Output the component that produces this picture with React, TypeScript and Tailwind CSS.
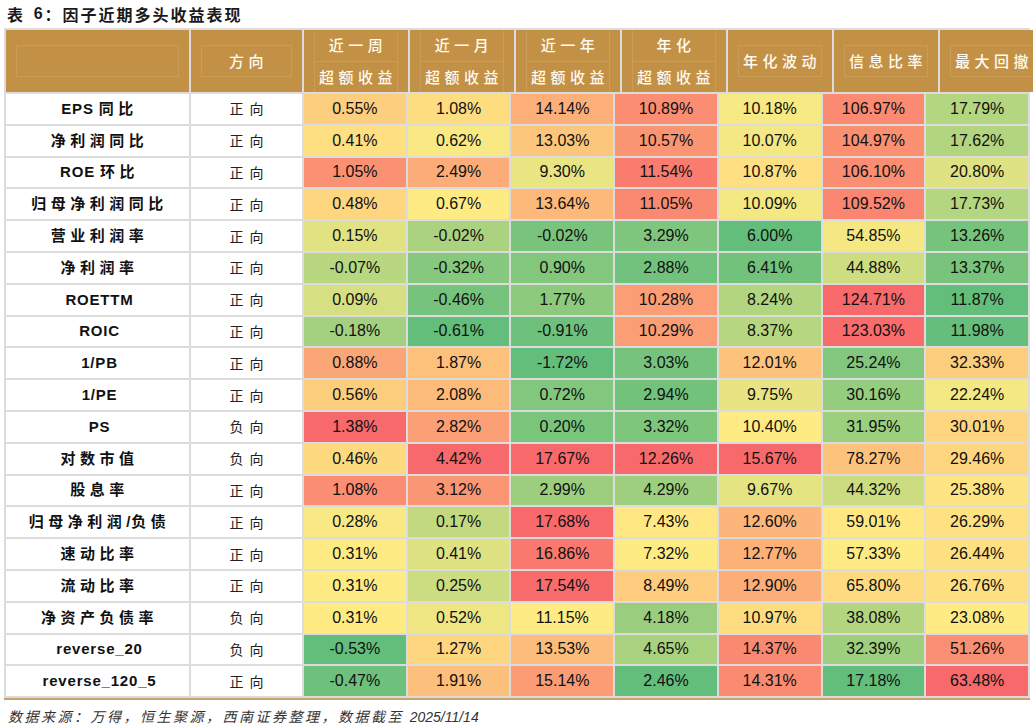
import React from "react";

const rows: string[][] = [
  ["EPS 同比", "正向", "0.55%", "1.08%", "14.14%", "10.89%", "10.18%", "106.97%", "17.79%"],
  ["净利润同比", "正向", "0.41%", "0.62%", "13.03%", "10.57%", "10.07%", "104.97%", "17.62%"],
  ["ROE 环比", "正向", "1.05%", "2.49%", "9.30%", "11.54%", "10.87%", "106.10%", "20.80%"],
  ["归母净利润同比", "正向", "0.48%", "0.67%", "13.64%", "11.05%", "10.09%", "109.52%", "17.73%"],
  ["营业利润率", "正向", "0.15%", "-0.02%", "-0.02%", "3.29%", "6.00%", "54.85%", "13.26%"],
  ["净利润率", "正向", "-0.07%", "-0.32%", "0.90%", "2.88%", "6.41%", "44.88%", "13.37%"],
  ["ROETTM", "正向", "0.09%", "-0.46%", "1.77%", "10.28%", "8.24%", "124.71%", "11.87%"],
  ["ROIC", "正向", "-0.18%", "-0.61%", "-0.91%", "10.29%", "8.37%", "123.03%", "11.98%"],
  ["1/PB", "正向", "0.88%", "1.87%", "-1.72%", "3.03%", "12.01%", "25.24%", "32.33%"],
  ["1/PE", "正向", "0.56%", "2.08%", "0.72%", "2.94%", "9.75%", "30.16%", "22.24%"],
  ["PS", "负向", "1.38%", "2.82%", "0.20%", "3.32%", "10.40%", "31.95%", "30.01%"],
  ["对数市值", "负向", "0.46%", "4.42%", "17.67%", "12.26%", "15.67%", "78.27%", "29.46%"],
  ["股息率", "正向", "1.08%", "3.12%", "2.99%", "4.29%", "9.67%", "44.32%", "25.38%"],
  ["归母净利润/负债", "正向", "0.28%", "0.17%", "17.68%", "7.43%", "12.60%", "59.01%", "26.29%"],
  ["速动比率", "正向", "0.31%", "0.41%", "16.86%", "7.32%", "12.77%", "57.33%", "26.44%"],
  ["流动比率", "正向", "0.31%", "0.25%", "17.54%", "8.49%", "12.90%", "65.80%", "26.76%"],
  ["净资产负债率", "负向", "0.31%", "0.52%", "11.15%", "4.18%", "10.97%", "38.08%", "23.08%"],
  ["reverse_20", "负向", "-0.53%", "1.27%", "13.53%", "4.65%", "14.37%", "32.39%", "51.26%"],
  ["reverse_120_5", "正向", "-0.47%", "1.91%", "15.14%", "2.46%", "14.31%", "17.18%", "63.48%"],
];

const headers: (string | [string, string])[] = [
  "",
  "方向",
  ["近一周", "超额收益"],
  ["近一月", "超额收益"],
  ["近一年", "超额收益"],
  ["年化", "超额收益"],
  "年化波动",
  "信息比率",
  "最大回撤",
];

const RED = [248, 105, 107];
const YEL = [255, 235, 132];
const GRN = [99, 190, 123];

const stats = Array.from({ length: 7 }, (_, c) => {
  const vals = rows.map((r) => parseFloat(r[c + 2])).sort((a, b) => a - b);
  return { min: vals[0], med: vals[Math.floor(vals.length / 2)], max: vals[vals.length - 1] };
});

function cellColor(v: number, c: number) {
  const { min, med, max } = stats[c];
  const from = YEL;
  let to = YEL;
  let t = 0;
  if (v >= med) {
    to = RED;
    t = max === med ? 0 : (v - med) / (max - med);
  } else {
    to = GRN;
    t = med === min ? 0 : (med - v) / (med - min);
  }
  const rgb = from.map((a, i) => Math.round(a + (to[i] - a) * t));
  return `rgb(${rgb[0]},${rgb[1]},${rgb[2]})`;
}

const CJK = /[\u3000-\u303f\u4e00-\u9fff\uff00-\uffef]/;

function Label({ text }: { text: string }) {
  const parts =
    text.match(/[\u3000-\u303f\u4e00-\u9fff\uff00-\uffef]+|[^\u3000-\u303f\u4e00-\u9fff\uff00-\uffef]+/g) || [];
  return (
    <span className="whitespace-nowrap">
      {parts.map((p, i) =>
        CJK.test(p) ? (
          <span key={i} className="font-['Noto_Sans_CJK_SC',sans-serif] text-[15px] font-bold tracking-[4.5px]">
            {p}
          </span>
        ) : (
          <span key={i} className="font-['Liberation_Sans',sans-serif] text-[15px] font-bold tracking-[0.8px]">
            {p}
          </span>
        )
      )}
    </span>
  );
}

function HeaderCell({ h }: { h: string | [string, string] }) {
  if (Array.isArray(h)) {
    return (
      <div className="bg-[#c39145] h-[62px] px-[10px]">
        <div className="h-full flex flex-col border-x border-white/10">
          <div className="flex-1 flex items-center justify-center border-b border-white/10 pl-[4px] whitespace-nowrap">
            {h[0]}
          </div>
          <div className="flex-1 flex items-center justify-center pl-[4px] whitespace-nowrap">{h[1]}</div>
        </div>
      </div>
    );
  }
  return (
    <div className="bg-[#c39145] h-[62px] px-[10px] py-[15px]">
      <div className="h-full flex items-center justify-center border border-white/10 pl-[4px] whitespace-nowrap">
        {h}
      </div>
    </div>
  );
}

export default function App() {
  return (
    <div className="w-[1033px] h-[728px] bg-white text-[#111] font-['Liberation_Sans','Noto_Sans_CJK_SC',sans-serif]">
      <div className="h-[28px] flex items-center pl-[7px] font-['Noto_Sans_CJK_SC',sans-serif] font-bold text-[16px] tracking-[2px] text-[#1a1a1a] whitespace-pre">
        表 <span className="font-['Liberation_Sans',sans-serif] ml-[3px]">6</span>：因子近期多头收益表现
      </div>
      <div className="ml-[4px] w-[1026px] bg-[#dcdcdc] pt-[2px] px-[2px] border-b-2 border-[#c9a46c]">
        <div className="grid grid-cols-[183px_111px_repeat(7,1fr)] gap-[2px] font-['Noto_Sans_CJK_SC',sans-serif] text-[15px] font-medium tracking-[4.5px] text-[#fffaf0]">
          {headers.map((h, i) => (
            <HeaderCell key={i} h={h} />
          ))}
        </div>
        <div className="grid grid-cols-[183px_111px_repeat(7,1fr)] gap-[2px] mt-[2px] auto-rows-[29.8px]">
          {rows.map((r, ri) => (
            <React.Fragment key={ri}>
              <div className="bg-white flex items-center justify-center pl-[4px]">
                <Label text={r[0]} />
              </div>
              <div className="bg-white flex items-center justify-center pl-[6px] font-['Noto_Sans_CJK_SC',sans-serif] text-[14px] tracking-[6px] text-[#222]">
                {r[1]}
              </div>
              {r.slice(2).map((v, ci) => (
                <div
                  key={ci}
                  className="flex items-center justify-center font-['Liberation_Sans',sans-serif] text-[16px] text-[#111]"
                  style={{ backgroundColor: cellColor(parseFloat(v), ci) }}
                >
                  {v}
                </div>
              ))}
            </React.Fragment>
          ))}
        </div>
        <div className="h-[2px] -mx-[2px] bg-[#dcdcdc]" />
      </div>
      <div className="pl-[8px] mt-[6px] italic text-[14px] text-[#333] font-['Noto_Sans_CJK_SC',sans-serif] tracking-[2.5px]">
        数据来源：万得，恒生聚源，西南证券整理，数据截至{" "}
        <span className="font-['Liberation_Sans',sans-serif] tracking-normal">2025/11/14</span>
      </div>
    </div>
  );
}
